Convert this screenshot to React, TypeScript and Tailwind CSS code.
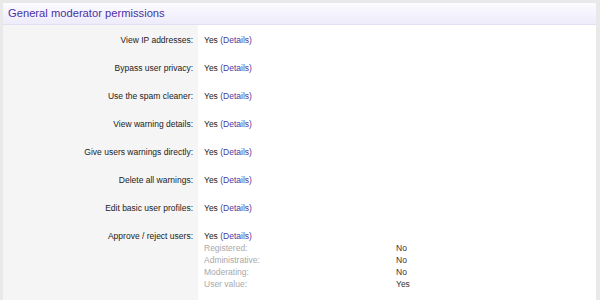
import React from 'react';

const rows = [
    'View IP addresses:',
    'Bypass user privacy:',
    'Use the spam cleaner:',
    'View warning details:',
    'Give users warnings directly:',
    'Delete all warnings:',
    'Edit basic user profiles:',
];

const subRows = [
    ['Registered:', 'No'],
    ['Administrative:', 'No'],
    ['Moderating:', 'No'],
    ['User value:', 'Yes'],
];

const YesDetails = () => (
    <span>
        Yes <a className="text-[#4a38a0] cursor-pointer">(Details)</a>
    </span>
);

export default function App() {
    return (
        <div
            className="w-[600px] h-[300px] overflow-hidden bg-[#e9e9e9] pt-[3px] pl-[3px] pr-[4px]"
            style={{ fontFamily: '"Liberation Sans", Arial, sans-serif' }}
        >
            <div className="bg-white h-full">
                <div className="h-[22px] flex items-center px-[5px] bg-gradient-to-b from-[#fcfbff] to-[#eeebfb] border-b border-[#e2def3]">
                    <h2 className="text-[11.2px] text-[#4c30a2] leading-none">General moderator permissions</h2>
                </div>
                <div className="text-[8.5px] leading-[11px] text-[#222]">
                    {rows.map((label) => (
                        <div key={label} className="flex">
                            <div className="w-[195px] shrink-0 bg-[#f5f5f5] text-right pr-[5px] pt-[10px] pb-[7px]">{label}</div>
                            <div className="pl-[6px] pt-[10px] pb-[7px]">
                                <YesDetails />
                            </div>
                        </div>
                    ))}
                    <div className="flex">
                        <div className="w-[195px] shrink-0 bg-[#f5f5f5] text-right pr-[5px] pt-[10px] pb-[70px]">Approve / reject users:</div>
                        <div className="pl-[6px] pt-[10px] flex-1">
                            <YesDetails />
                            <div className="grid grid-cols-[192px_1fr] leading-[12px]">
                                {subRows.map(([k, v]) => (
                                    <React.Fragment key={k}>
                                        <div className="text-[#a9a9a9]">{k}</div>
                                        <div className="text-[#333]">{v}</div>
                                    </React.Fragment>
                                ))}
                            </div>
                        </div>
                    </div>
                </div>
            </div>
        </div>
    );
}
